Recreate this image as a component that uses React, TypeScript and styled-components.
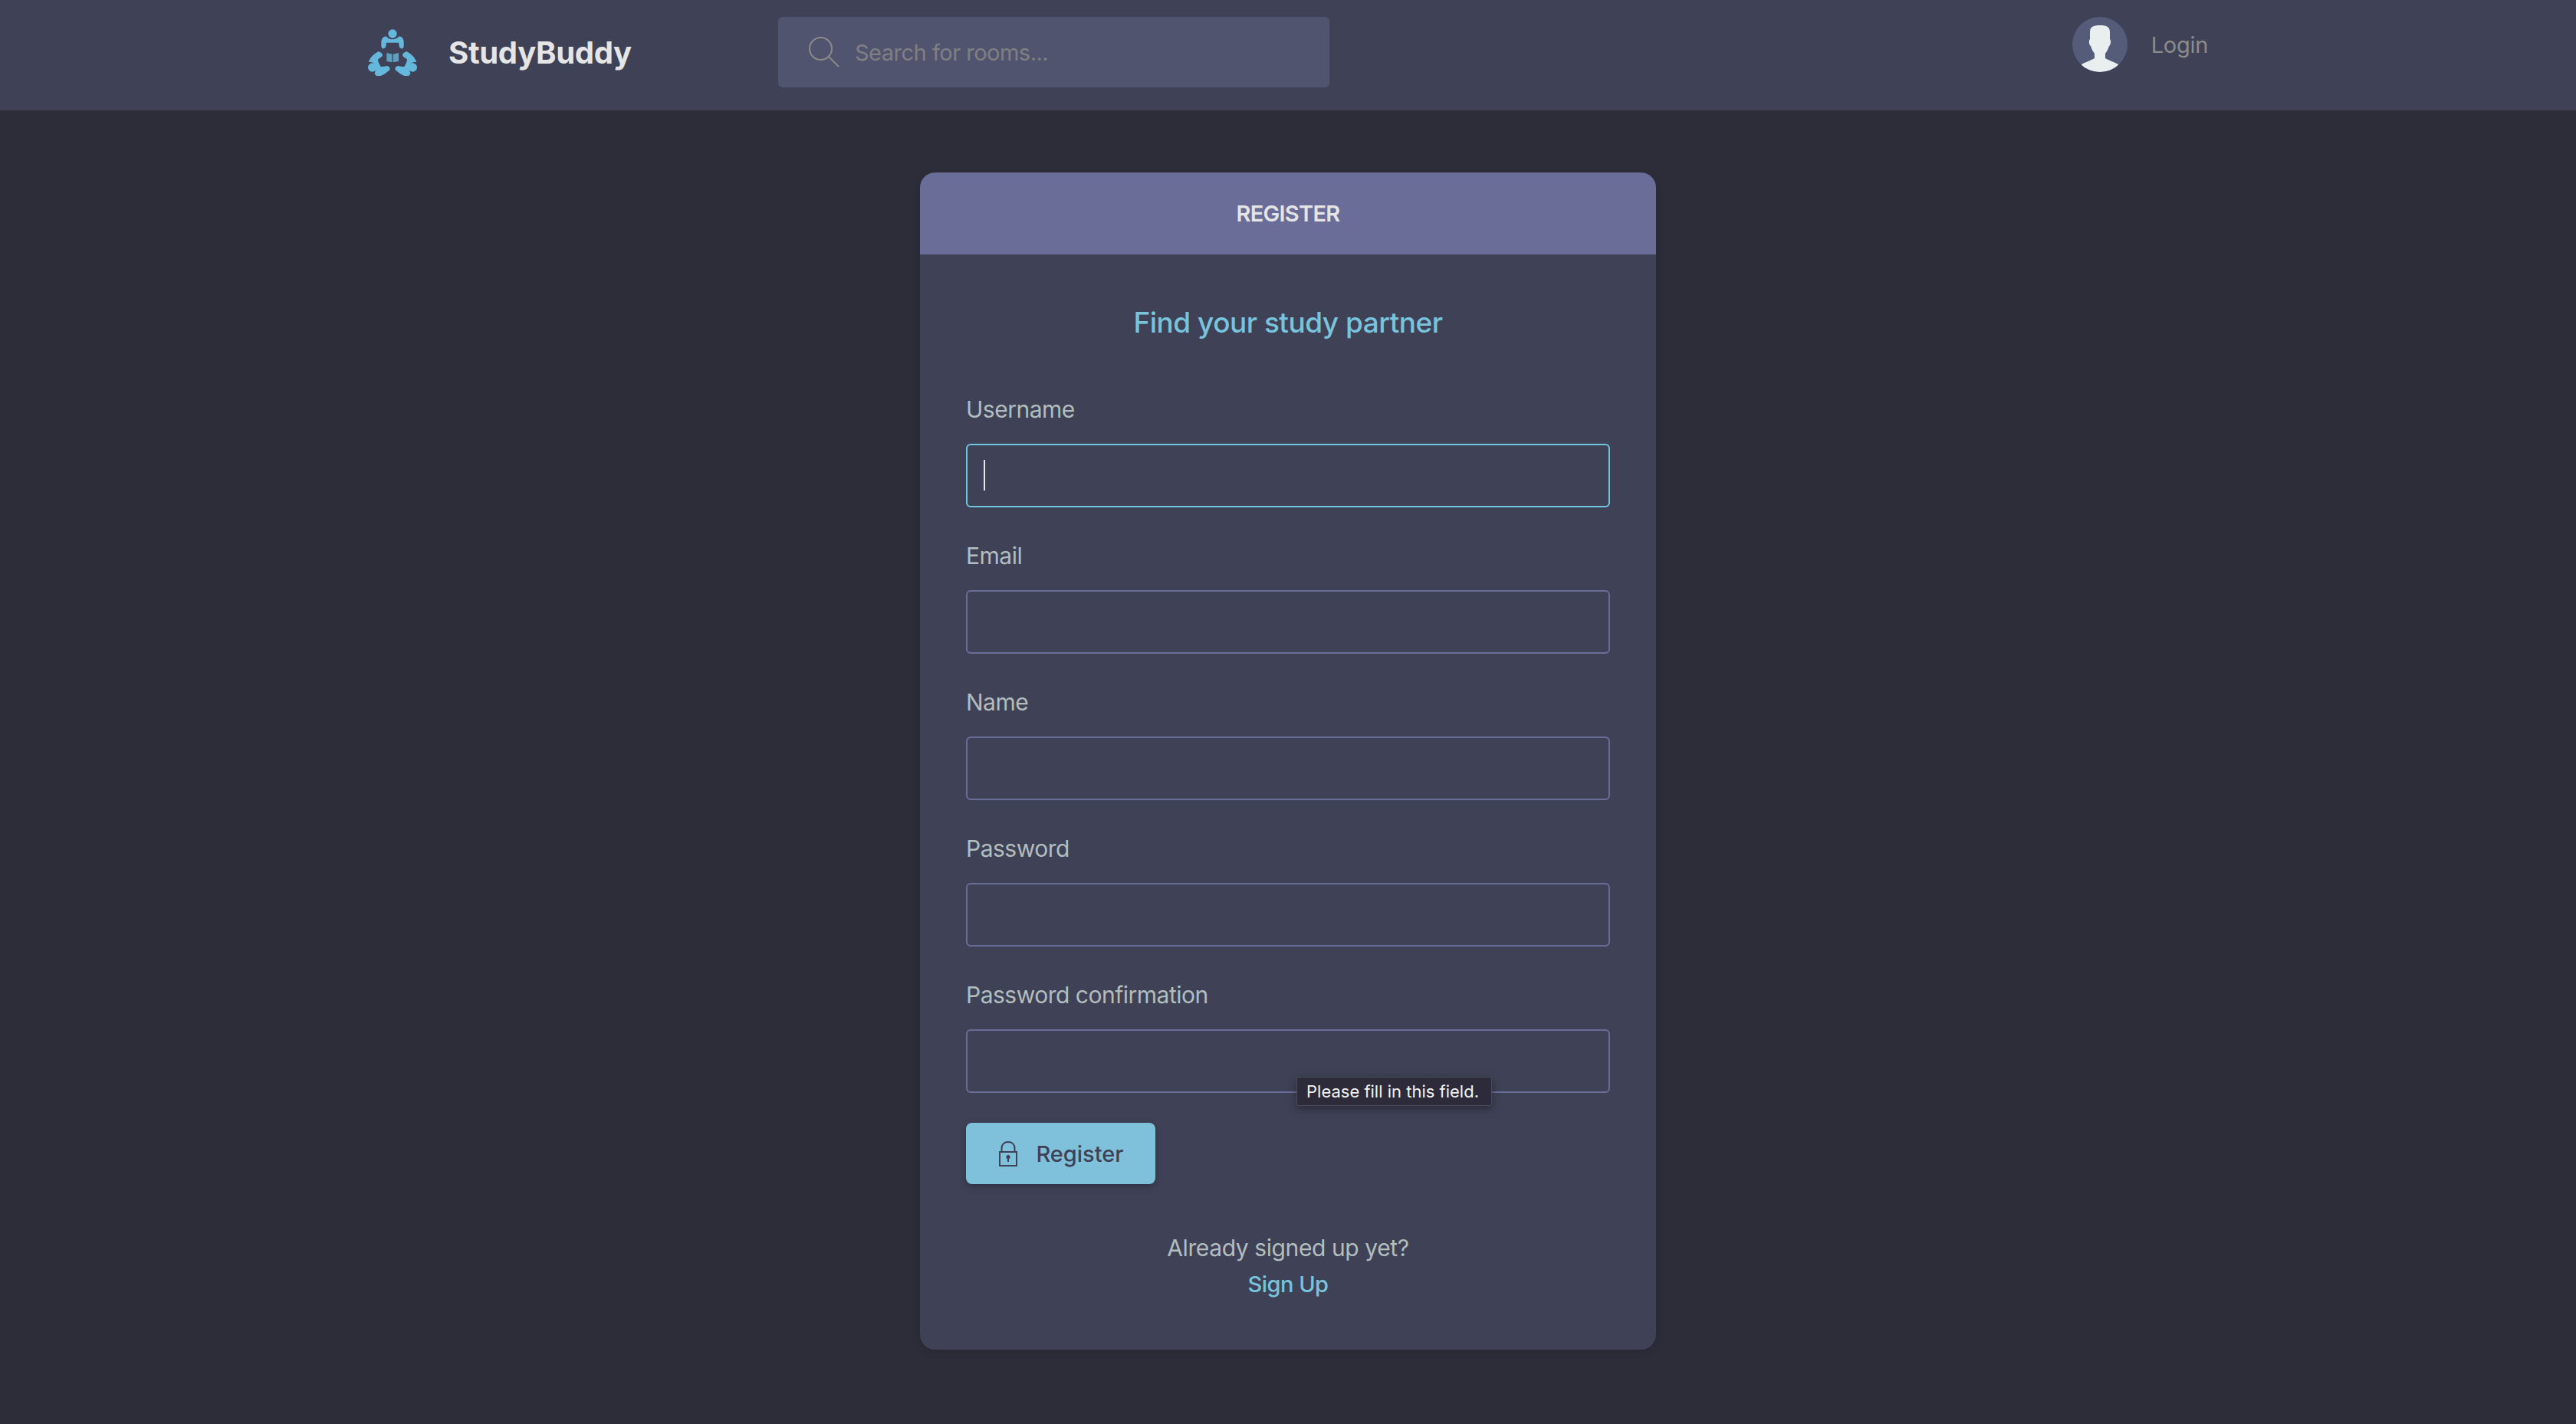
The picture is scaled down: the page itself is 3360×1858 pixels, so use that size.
import React from 'react'
import styled, { createGlobalStyle } from 'styled-components'

const GlobalStyle = createGlobalStyle`
  html, body {
    margin: 0;
    padding: 0;
    background: #2d2d39;
  }
  * {
    box-sizing: border-box;
  }
  body {
    font-family: Inter, "Noto Sans", sans-serif;
    color: #e5e5e5;
  }
`

const Page = styled.div`
  min-height: 1858px;
  background: #2d2d39;
`

const Header = styled.header`
  height: 144px;
  background: #3f4156;
`

const HeaderInner = styled.div`
  width: 2400px;
  margin: 0 auto;
  display: flex;
  justify-content: space-between;
  align-items: flex-start;
`

const HeaderLeft = styled.div`
  display: flex;
  align-items: flex-start;
`

const Brand = styled.a`
  width: 535px;
  height: 136px;
  display: flex;
  align-items: center;
  gap: 41px;
`

const BrandName = styled.span`
  font-size: 40px;
  font-weight: 700;
  letter-spacing: -0.3px;
  color: #e5e5e5;
`

const SearchBox = styled.label`
  width: 719px;
  height: 92px;
  margin-top: 22px;
  padding: 0 40px;
  display: flex;
  align-items: center;
  gap: 20px;
  background: #51546e;
  border-radius: 6px;
`

const SearchInput = styled.input`
  flex: 1;
  border: 0;
  padding: 0;
  outline: 0;
  background: transparent;
  font: inherit;
  font-size: 29px;
  letter-spacing: -0.5px;
  color: #e5e5e5;
  &::placeholder {
    color: #807f82;
    opacity: 1;
  }
`

const UserLink = styled.a`
  height: 116px;
  display: flex;
  align-items: center;
  gap: 31px;
`

const LoginText = styled.span`
  font-size: 29px;
  letter-spacing: -0.3px;
  color: #8b8b8b;
`

const Main = styled.main`
  padding-top: 81px;
  display: flex;
  justify-content: center;
`

const Card = styled.section`
  width: 960px;
  height: 1536px;
  background: #3f4156;
  border-radius: 20px;
  overflow: hidden;
  box-shadow: 0 3px 8px rgba(0, 0, 0, 0.12);
`

const CardHeader = styled.div`
  height: 107px;
  display: flex;
  align-items: center;
  justify-content: center;
  background: #696d97;
  font-size: 29px;
  font-weight: 600;
  letter-spacing: -0.7px;
  color: #e5e5e5;
`

const CardBody = styled.div`
  padding: 66px 60px 0;
`

const Tagline = styled.h2`
  margin: 0 0 69px;
  height: 46px;
  line-height: 46px;
  text-align: center;
  font-size: 37px;
  font-weight: 500;
  letter-spacing: -0.5px;
  color: #78c4dc;
`

const FieldList = styled.div`
  display: grid;
  gap: 42px;
`

const Field = styled.div`
  height: 149px;
`

const FieldLabel = styled.label`
  display: block;
  height: 44px;
  line-height: 42px;
  font-size: 30px;
  letter-spacing: -0.5px;
  color: #b2bdbd;
`

const InputRow = styled.div`
  position: relative;
  margin-top: 22px;
`

const TextInput = styled.input<{ $focused?: boolean }>`
  display: block;
  width: 100%;
  height: 83px;
  padding: 0 20px;
  background: transparent;
  border: 2px solid ${(props) => (props.$focused ? '#71c6dd' : '#696d97')};
  border-radius: 6px;
  outline: 0;
  font: inherit;
  font-size: 30px;
  color: #e5e5e5;
`

const Caret = styled.span`
  position: absolute;
  left: 23px;
  top: 21px;
  width: 2px;
  height: 40px;
  background: #e5e5e5;
`

const Tooltip = styled.div`
  position: absolute;
  left: 431px;
  top: 62px;
  width: 255px;
  height: 38px;
  padding-left: 12px;
  display: flex;
  align-items: center;
  background: #2d2b39;
  border: 1px solid #4a4a58;
  border-radius: 2px;
  box-shadow: 0 4px 12px rgba(0, 0, 0, 0.35);
  font-size: 22px;
  white-space: nowrap;
  color: #f2f2f2;
`

const SubmitButton = styled.button`
  width: 247px;
  height: 80px;
  margin-top: 39px;
  padding: 0 0 0 2px;
  display: flex;
  align-items: center;
  justify-content: center;
  gap: 24px;
  background: #7fc1da;
  border: 0;
  border-radius: 8px;
  box-shadow: 0 3px 8px rgba(0, 0, 0, 0.25);
  font: inherit;
  font-size: 29px;
  font-weight: 500;
  color: #3f4156;
`

const FooterNote = styled.div`
  margin-top: 59px;
  text-align: center;
  font-size: 30px;
  line-height: 48px;
`

const NoteText = styled.p`
  margin: 0;
  letter-spacing: -0.4px;
  color: #b2bdbd;
`

const SignUpLink = styled.a`
  display: block;
  font-size: 29px;
  font-weight: 500;
  letter-spacing: -0.5px;
  color: #78c4dc;
`

const LogoMark = () => (
  <svg width="64" height="61" viewBox="30 22 192 183" fill="#65b7dc">
    <circle cx="126" cy="40" r="17" />
    <path d="M82 90 L82 70 Q84 52 100 50 Q110 62 126 62 Q142 62 152 50 Q168 52 170 70 L170 90 Q168 100 160 98 Q152 96 152 88 L150 75 L102 75 L100 88 Q100 96 92 98 Q84 100 82 90 Z" />
    <circle cx="47" cy="172" r="17" />
    <path
      d="M35 148 Q45 125 70 112 Q85 115 85 126 Q80 132 68 138 Q65 150 80 172 Q90 170 105 168 Q118 172 112 182 Q95 198 75 205 Q60 205 58 195 Q68 175 55 155 Q45 148 35 148 Z"
      stroke="#65b7dc"
      strokeWidth="4"
    />
    <g transform="matrix(-1 0 0 1 252 0)">
      <circle cx="47" cy="172" r="17" />
      <path
        d="M35 148 Q45 125 70 112 Q85 115 85 126 Q80 132 68 138 Q65 150 80 172 Q90 170 105 168 Q118 172 112 182 Q95 198 75 205 Q60 205 58 195 Q68 175 55 155 Q45 148 35 148 Z"
        stroke="#65b7dc"
        strokeWidth="4"
      />
    </g>
    <path d="M103 115 L124 120 L124 152 L103 148 Z M128 120 L150 115 L150 148 L128 152 Z" opacity="0.8" />
  </svg>
)

const SearchIcon = () => (
  <svg width="40" height="40" viewBox="0 0 40 40" fill="none" stroke="#8b8a88" strokeWidth="2">
    <circle cx="15.5" cy="15.5" r="14.5" />
    <path d="M25 25 L39 39" />
  </svg>
)

const Avatar = () => (
  <svg width="72" height="72" viewBox="0 0 72 72">
    <defs>
      <clipPath id="avatar-clip">
        <circle cx="36" cy="36" r="36" />
      </clipPath>
    </defs>
    <g clipPath="url(#avatar-clip)">
      <rect width="72" height="72" fill="#545c7a" />
      <path
        d="M23 20 C23 13 27 11 36 11 C45 11 49 13 49 20 L49 29 C51 31 50 37 48 38 C47 42 45 45 43 48 L43 54 C46 56 52 58 60 62 L60 72 L12 72 L12 62 C20 58 26 56 29 54 L29 48 C27 45 25 42 24 38 C22 37 21 31 23 29 Z"
        fill="#e9eeef"
      />
    </g>
  </svg>
)

const LockIcon = () => (
  <svg width="24" height="33" viewBox="0 0 24 33" fill="none" stroke="#3f4156" strokeWidth="2">
    <rect x="1" y="14" width="22" height="18" />
    <path d="M3.5 14 L3.5 9.5 C3.5 4 7 1 12 1 C17 1 20.5 4 20.5 9.5 L20.5 14" />
    <path d="M12 21 L12 27" />
    <circle cx="12" cy="20.5" r="1.6" fill="#3f4156" />
  </svg>
)

const fields = ['Username', 'Email', 'Name', 'Password', 'Password confirmation']

function App() {
  return (
    <Page>
      <GlobalStyle />
      <Header>
        <HeaderInner>
          <HeaderLeft>
            <Brand>
              <LogoMark />
              <BrandName>StudyBuddy</BrandName>
            </Brand>
            <SearchBox>
              <SearchIcon />
              <SearchInput placeholder="Search for rooms..." />
            </SearchBox>
          </HeaderLeft>
          <UserLink>
            <Avatar />
            <LoginText>Login</LoginText>
          </UserLink>
        </HeaderInner>
      </Header>
      <Main>
        <Card>
          <CardHeader>REGISTER</CardHeader>
          <CardBody>
            <Tagline>Find your study partner</Tagline>
            <FieldList>
              {fields.map((name, i) => (
                <Field key={name}>
                  <FieldLabel>{name}</FieldLabel>
                  <InputRow>
                    <TextInput $focused={i === 0} />
                    {i === 0 && <Caret />}
                    {i === fields.length - 1 && <Tooltip>Please fill in this field.</Tooltip>}
                  </InputRow>
                </Field>
              ))}
            </FieldList>
            <SubmitButton>
              <LockIcon />
              Register
            </SubmitButton>
            <FooterNote>
              <NoteText>Already signed up yet?</NoteText>
              <SignUpLink>Sign Up</SignUpLink>
            </FooterNote>
          </CardBody>
        </Card>
      </Main>
    </Page>
  )
}

export default App
